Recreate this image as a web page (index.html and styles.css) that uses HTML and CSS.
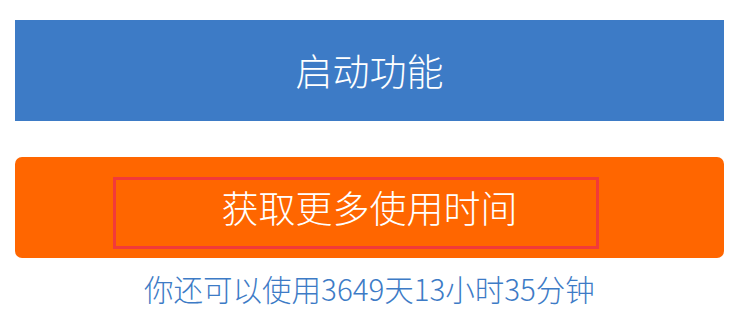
FILE: index.html
```html
<!DOCTYPE html>
<html lang="zh-CN">
<head>
<meta charset="utf-8">
<link rel="stylesheet" href="styles.css">
</head>
<body>
<main class="page">
  <div class="btn btn-start">启动功能</div>
  <div class="btn btn-more">
    <span class="focus-box"></span>
    <span class="btn-label">获取更多使用时间</span>
  </div>
  <p class="remain">你还可以使用3649天13小时35分钟</p>
</main>
</body>
</html>
```

FILE: styles.css
```css
html, body {
  margin: 0;
  padding: 0;
  background: #ffffff;
}
body {
  width: 733px;
  height: 310px;
  overflow: hidden;
  font-family: "Noto Sans CJK SC", "Noto Sans", sans-serif;
}
.page {
  display: flex;
  flex-direction: column;
  padding: 20px 9px 0 15px;
}
.btn {
  height: 101px;
  display: flex;
  align-items: center;
  justify-content: center;
  color: #ffffff;
  font-size: 37px;
  font-weight: 300;
  line-height: 1;
}
.btn-start {
  background: #3d7bc6;
}
.btn-more {
  position: relative;
  margin-top: 36px;
  background: #ff6600;
  border-radius: 7px;
}
.btn-label {
  position: relative;
}
.focus-box {
  position: absolute;
  left: 98px;
  top: 20px;
  width: 480px;
  height: 66px;
  border: 3px solid #f23a3a;
}
.remain {
  margin: 12px 0 0;
  text-align: center;
  color: #3d7bc6;
  font-size: 29.5px;
  font-weight: 300;
  line-height: 36px;
}
```
